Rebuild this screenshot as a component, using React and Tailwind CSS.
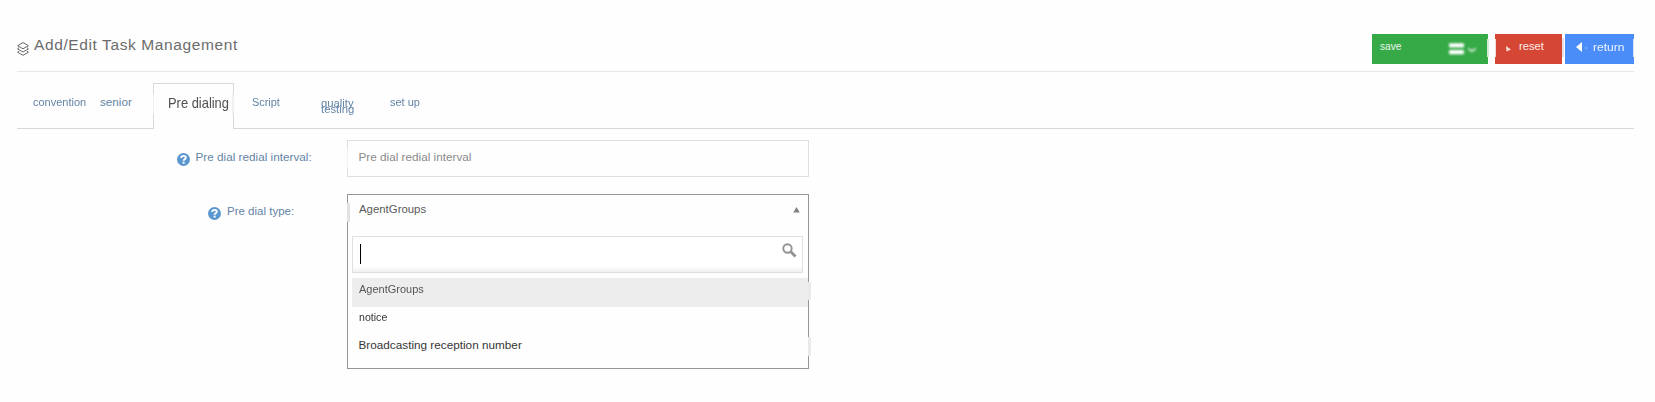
import React from "react";

function LayersIcon() {
  return (
    <svg className="mt-[42px] h-[14px] w-[12px] shrink-0" viewBox="0 0 12 14" fill="none" stroke="#4a4a4a" strokeWidth="0.85" strokeLinejoin="round">
      <path d="M6 .6 11.4 3.7 6 6.8.6 3.7Z" />
      <path d="M2 5.6.6 6.9 6 10l5.4-3.1L10 5.6" />
      <path d="M2 8.9.6 10.2 6 13.3l5.4-3.1L10 8.9" />
    </svg>
  );
}

function HelpIcon() {
  return (
    <svg className="h-[13px] w-[13px] shrink-0" viewBox="0 0 13 13">
      <circle cx="6.5" cy="6.5" r="6.5" fill="#5b97cf" />
      <path d="M4.1 5C4.2 3.500 5.200 2.900 6.500 2.900c1.300 0 2.300.7 2.300 1.800 0 1.500-2.200 1.500-2.200 3" fill="none" stroke="#fff" strokeWidth="1.900" />
      <rect x="5.600" y="8.700" width="2" height="1.900" fill="#fff" />
    </svg>
  );
}

function Tick({ className }) {
  return <span className={"absolute " + className} />;
}

function Header() {
  return (
    <header className="flex h-[72px] items-start border-b border-[#e7e7e7]">
      <LayersIcon />
      <h1 className="ml-[5px] mt-[35px] whitespace-nowrap text-[15.500px] leading-[20px] tracking-[0.61px] text-[#6c6c6c]">
        Add/Edit Task Management
      </h1>
      <div className="ml-auto mt-[34px] flex h-[30px] text-white">
        <button className="relative flex h-[30px] w-[116px] items-start bg-[#36aa47] pl-[8px]">
          <span className="mt-[3px] text-[10.200px] leading-[20px] text-white/90">save</span>
          <svg className="absolute left-[75px] top-[7px] h-[16px] w-[32px]" viewBox="0 0 32 16">
            <g className="blur-[0.8px]" fill="#fff">
              <rect x="2" y="2.200" width="15" height="4.300" rx="1" />
              <rect x="2" y="9" width="15" height="4.300" rx="1" />
              <path d="m21 6.500 4 2.200 4-2.200v2.300l-4 2.700-4-2.700Z" opacity="0.65" />
            </g>
          </svg>
          <Tick className="-right-[1px] top-[5px] h-[18px] w-[2px] bg-[#d7ead9]" />
        </button>
        <button className="relative ml-[7px] flex h-[30px] w-[67px] items-start bg-[#d64635] pl-[23px]">
          <Tick className="left-0 top-[5px] h-[18px] w-[1px] bg-[#f3dcd9]" />
          <svg className="absolute left-[9px] top-[11px] h-[9px] w-[9px]" viewBox="0 0 9 9">
            <path className="blur-[0.7px]" d="m2 1 5 3.500-4.500 2Z" fill="#fff" opacity="0.8" />
          </svg>
          <span className="ml-[1px] mt-[2px] text-[11.200px] leading-[20px] text-white/90">reset</span>
          <Tick className="-right-[2px] top-[4px] h-[19px] w-[2px] bg-[#e9dfe3]" />
        </button>
        <button className="relative ml-[3px] flex h-[30px] w-[69px] items-start bg-[#4b8df8] pl-[28px]">
          <svg className="absolute left-[10px] top-[7px] h-[12px] w-[14px]" viewBox="0 0 14 12">
            <g className="blur-[0.6px]" fill="#fff">
              <path d="M7 1v10L1 6Z" />
              <circle cx="11" cy="7" r="1.500" opacity="0.2" />
            </g>
          </svg>
          <span className="mt-[3px] origin-left scale-x-[1.05] text-[11.500px] leading-[20px] text-white/90">return</span>
          <Tick className="right-0 top-[5px] h-[18px] w-[1px] bg-[#d5e3fb]" />
        </button>
      </div>
    </header>
  );
}

function Tabs() {
  return (
    <nav className="flex h-[57px] items-end text-[#6384a6]">
      <div className="flex h-[46px] w-[136px] border-b border-[#d8d8d8] pl-[16px] pt-[9px] leading-[20px]">
        <a className="mt-[1px] w-[67px] origin-left scale-x-[1.1] text-[10px]">convention</a>
        <a className="origin-left text-[11.700px]">senior</a>
      </div>
      <div className="relative h-[46px] w-[81px] border-x border-t border-[#d8d8d8] pl-[14px] pt-[7px]">
        <a className="inline-block origin-left scale-x-[0.89] whitespace-nowrap text-[14.500px] leading-[20px] text-[#505050]">Pre dialing</a>
        <Tick className="-left-[1px] top-[10px] h-[20px] w-[1px] bg-[#f0f0f0]" />
        <Tick className="-right-[1px] top-[10px] h-[20px] w-[2px] bg-[#f0f0f0]" />
      </div>
      <div className="flex h-[46px] flex-1 border-b border-[#d8d8d8] pl-[18px] pt-[10px] text-[10px] leading-[20px]">
        <a className="w-[69px] origin-left scale-x-[1.09]">Script</a>
        <a className="mt-[8px] flex w-[69px] origin-left scale-x-[1.13] flex-col leading-[6px]">
          <span>quality</span>
          <span>testing</span>
        </a>
        <a className="origin-left scale-x-[1.1]">set up</a>
      </div>
    </nav>
  );
}

function SearchIcon() {
  return (
    <svg className="mr-[5px] mt-[6px] h-[15px] w-[15px]" viewBox="0 0 15 15" fill="none" stroke="#929292">
      <circle cx="5.500" cy="5.500" r="4.200" strokeWidth="1.900" />
      <path d="m8.800 8.800 4.700 4.700" strokeWidth="2.800" />
    </svg>
  );
}

function DialTypeSelect() {
  return (
    <div className="relative h-[175px] w-[462px] border border-[#969696] pl-[4px]">
      <Tick className="-left-[1px] top-[8px] h-[19px] w-[3px] bg-[#e2e2e2]" />
      <div className="flex h-[41px] justify-between pl-[7px] pr-[8px] text-[#5a5a5a]">
        <span className="mt-[4px] text-[11.400px] leading-[20px]">AgentGroups</span>
        <svg className="mt-[12px] h-[6px] w-[7px]" viewBox="0 0 7 6">
          <path d="M3.500 0 6.700 5.500H.3Z" fill="#808080" />
        </svg>
      </div>
      <div className="flex h-[37px] w-[451px] justify-between border border-[#e0e0e0] bg-gradient-to-t from-[#eee] to-white to-[15%]">
        <span className="ml-[7px] mt-[7px] h-[20px] w-px bg-black" />
        <SearchIcon />
      </div>
      <ul className="mt-[5px] leading-[20px] text-[#363636]">
        <li className="h-[29px] bg-[#ededed] pl-[6.500px] pt-[2px] text-[#555]">
          <span className="inline-block origin-left scale-x-[1.090] align-top text-[10.100px]">AgentGroups</span>
        </li>
        <li className="h-[28px] pl-[7px] pt-[1px]">
          <span className="inline-block origin-left scale-x-[1.060] align-top text-[10px]">notice</span>
        </li>
        <li className="pl-[6.500px]">
          <span className="inline-block align-top text-[11.750px]">Broadcasting reception number</span>
        </li>
      </ul>
      <Tick className="-right-[3px] top-[87px] h-[18px] w-[3px] bg-[#e9e9e9]" />
      <Tick className="-right-[3px] top-[142px] h-[19px] w-[3px] bg-[#e9e9e9]" />
    </div>
  );
}

export default function App() {
  return (
    <div className="h-[402px] w-[1655px] overflow-hidden bg-[#fefefe] pl-[17px] pr-[21px] font-['Liberation_Sans',Arial,sans-serif]">
      <Header />
      <Tabs />
      <main>
        <div className="flex pt-[11px]">
          <label className="flex w-[330px] pl-[160px] text-[#6384a6]">
            <span className="mt-[13px]"><HelpIcon /></span>
            <span className="ml-[5.500px] mt-[7px] whitespace-nowrap text-[11.750px] leading-[20px]">Pre dial redial interval:</span>
          </label>
          <div className="relative h-[37px] w-[462px] border border-[#dfdfdf] pl-[10.500px] pt-[6px] text-[11.750px] leading-[20px] text-[#8a8a8a]">
            Pre dial redial interval
            <Tick className="-left-[1px] top-[8px] h-[19px] w-[1px] bg-[#f1f1f1]" />
          </div>
        </div>
        <div className="mt-[17px] flex">
          <label className="flex w-[330px] pl-[190.500px] text-[#6384a6]">
            <span className="mt-[13px]"><HelpIcon /></span>
            <span className="ml-[6.500px] mt-[7px] text-[11.500px] leading-[20px]">Pre dial type:</span>
          </label>
          <DialTypeSelect />
        </div>
      </main>
    </div>
  );
}
